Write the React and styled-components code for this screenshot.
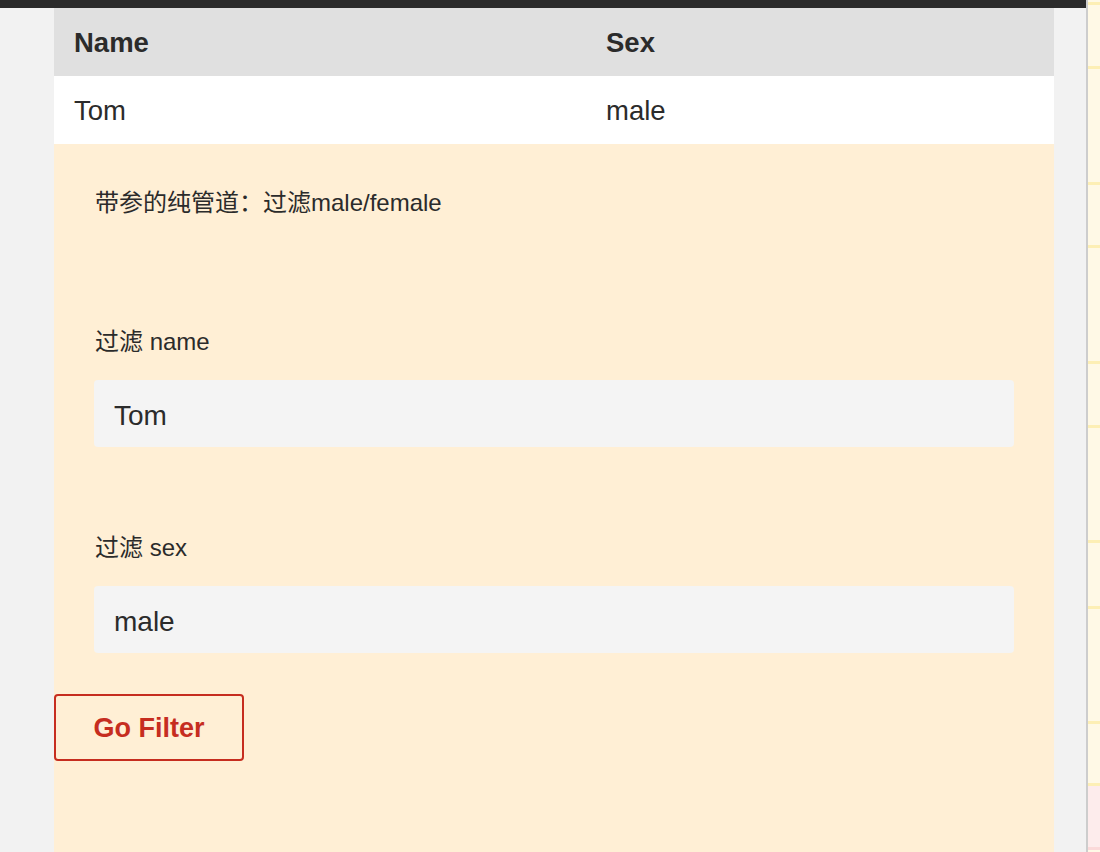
import React from "react";
import styled, { createGlobalStyle } from "styled-components";

const Global = createGlobalStyle`
  html, body { margin: 0; padding: 0; height: 100%; }
  body {
    font-family: "Liberation Sans", Arial, "Noto Sans CJK SC", sans-serif;
    color: #333;
    background: #f2f2f2;
  }
  #root { min-height: 100%; }
  * { box-sizing: border-box; }
`;

const Page = styled.div`
  display: flex;
  height: 852px;
  overflow: hidden;
`;

const MainPane = styled.div`
  width: 1086px;
  display: flex;
  flex-direction: column;
  background: #f2f2f2;
`;

const TopBar = styled.div`
  height: 8px;
  flex: none;
  background: #2b2b2b;
`;

const Stage = styled.div`
  flex: 1;
  display: flex;
  padding-left: 54px;
`;

const Panel = styled.div`
  width: 1000px;
  display: flex;
  flex-direction: column;
  background: papayawhip;
`;

const Table = styled.table`
  width: 100%;
  border-collapse: collapse;
  font-size: 27.5px;
`;

const HeadCell = styled.th`
  height: 68px;
  padding: 2px 20px 0;
  text-align: left;
  font-weight: bold;
  background: #e0e0e0;
  color: #2b2b2b;
  width: ${(p) => p.$w || "auto"};
`;

const Cell = styled.td`
  height: 68px;
  padding: 2px 20px 0;
  background: #fff;
  color: #2b2b2b;
`;

const FormArea = styled.div`
  padding: 44px 40px 0;
  display: flex;
  flex-direction: column;
`;

const Heading = styled.p`
  margin: 0 0 0 1px;
  font-size: 24px;
  line-height: 30px;
  color: #2b2b2b;
`;

const Fields = styled.div`
  margin-top: 109px;
  display: flex;
  flex-direction: column;
  gap: 86px;
`;

const Field = styled.label`
  display: flex;
  flex-direction: column;
  gap: 23px;
`;

const Label = styled.span`
  font-size: 24px;
  line-height: 30px;
  margin-left: 1px;
  color: #2b2b2b;
`;

const Input = styled.input`
  height: 67px;
  width: 100%;
  border: none;
  border-radius: 4px;
  background: #f4f4f4;
  padding: 5px 20px 0;
  font-family: inherit;
  font-size: 28px;
  color: #2b2b2b;
  outline: none;
`;

const Button = styled.button`
  margin-top: 41px;
  align-self: flex-start;
  width: 190px;
  height: 67px;
  padding: 2px 0 0;
  border: 2px solid #c62d1f;
  border-radius: 4px;
  background: transparent;
  color: #c62d1f;
  font-family: inherit;
  font-size: 27px;
  font-weight: bold;
  cursor: pointer;
`;

const Divider = styled.div`
  width: 2px;
  flex: none;
  background: #cdcdcd;
`;

const SideStrip = styled.div`
  flex: 1;
  display: flex;
  flex-direction: column;
  background: #fff9e6;
`;

const StripCell = styled.div`
  flex: none;
  height: ${(p) => p.$h}px;
  border-bottom: 3px solid ${(p) => (p.$pink ? "#fbd9d9" : "#fdefb5")};
  background: ${(p) => (p.$pink ? "#fdecec" : "#fff9e6")};
`;

const stripCells = [
  { h: 5 },
  { h: 64 },
  { h: 116 },
  { h: 63 },
  { h: 116 },
  { h: 64 },
  { h: 115 },
  { h: 66 },
  { h: 115 },
  { h: 62 },
  { h: 64, pink: true },
];

export default function App() {
  return (
    <>
      <Global />
      <Page>
        <MainPane>
          <TopBar />
          <Stage>
            <Panel>
              <Table>
                <thead>
                  <tr>
                    <HeadCell $w="532px">Name</HeadCell>
                    <HeadCell>Sex</HeadCell>
                  </tr>
                </thead>
                <tbody>
                  <tr>
                    <Cell>Tom</Cell>
                    <Cell>male</Cell>
                  </tr>
                </tbody>
              </Table>
              <FormArea>
                <Heading>带参的纯管道：过滤male/female</Heading>
                <Fields>
                  <Field>
                    <Label>过滤 name</Label>
                    <Input defaultValue="Tom" />
                  </Field>
                  <Field>
                    <Label>过滤 sex</Label>
                    <Input defaultValue="male" />
                  </Field>
                </Fields>
              </FormArea>
              <Button>Go Filter</Button>
            </Panel>
          </Stage>
        </MainPane>
        <Divider />
        <SideStrip>
          {stripCells.map((c, i) => (
            <StripCell key={i} $h={c.h} $pink={c.pink} />
          ))}
        </SideStrip>
      </Page>
    </>
  );
}
